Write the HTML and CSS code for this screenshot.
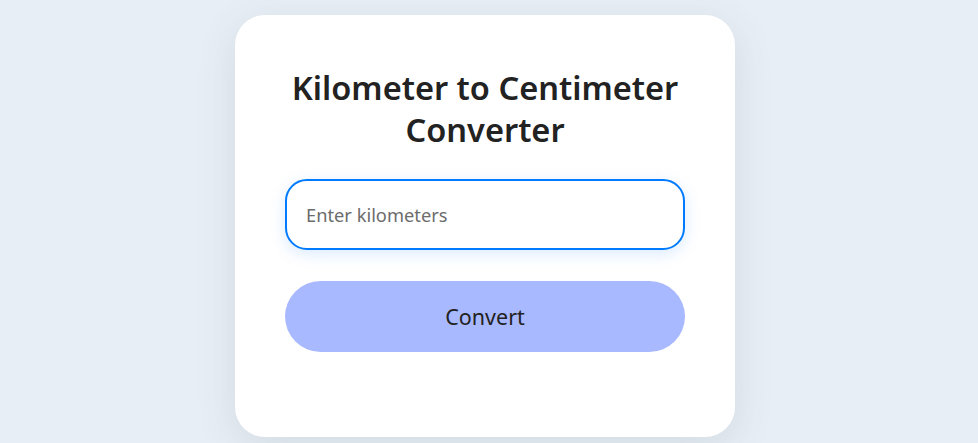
FILE: index.html
```html
<!DOCTYPE html>
<html lang="en">
<head>
<meta charset="UTF-8">
<title>Kilometer to Centimeter Converter</title>
<link rel="stylesheet" href="styles.css">
</head>
<body>
<main class="card">
  <h1 class="title">Kilometer to Centimeter Converter</h1>
  <input class="field" type="number" placeholder="Enter kilometers">
  <button class="btn" type="button">Convert</button>
</main>
</body>
</html>
```

FILE: styles.css
```css
* { box-sizing: border-box; }
html, body { height: 100%; }
body {
  margin: 0;
  background: #e8eef5;
  font-family: "Noto Sans", "Open Sans", sans-serif;
  display: flex;
  justify-content: center;
  align-items: flex-start;
  padding: 15px 8px 0 0;
}
.card {
  width: 500px;
  height: 422px;
  background: #fff;
  border-radius: 30px;
  box-shadow: 0 10px 40px rgba(60, 80, 100, 0.12);
  padding: 52px 50px 50px;
  display: flex;
  flex-direction: column;
}
.title {
  margin: 0 0 28px;
  font-size: 32.6px;
  line-height: 42px;
  font-weight: 560;
  color: #222;
  text-align: center;
}
.field {
  width: 100%;
  height: 71px;
  flex: none;
  border: 2px solid #007bff;
  border-radius: 22px;
  padding: 0 19px;
  font-family: inherit;
  font-size: 18.3px;
  color: #222;
  outline: none;
  box-shadow: 0 4px 16px rgba(0, 123, 255, 0.15);
}
.field::placeholder { color: #6c6c6c; }
.btn {
  margin-top: 31px;
  width: 100%;
  height: 71px;
  flex: none;
  border: none;
  border-radius: 36px;
  background: #a9b9ff;
  font-family: inherit;
  font-size: 21.5px;
  color: #222;
}
```
